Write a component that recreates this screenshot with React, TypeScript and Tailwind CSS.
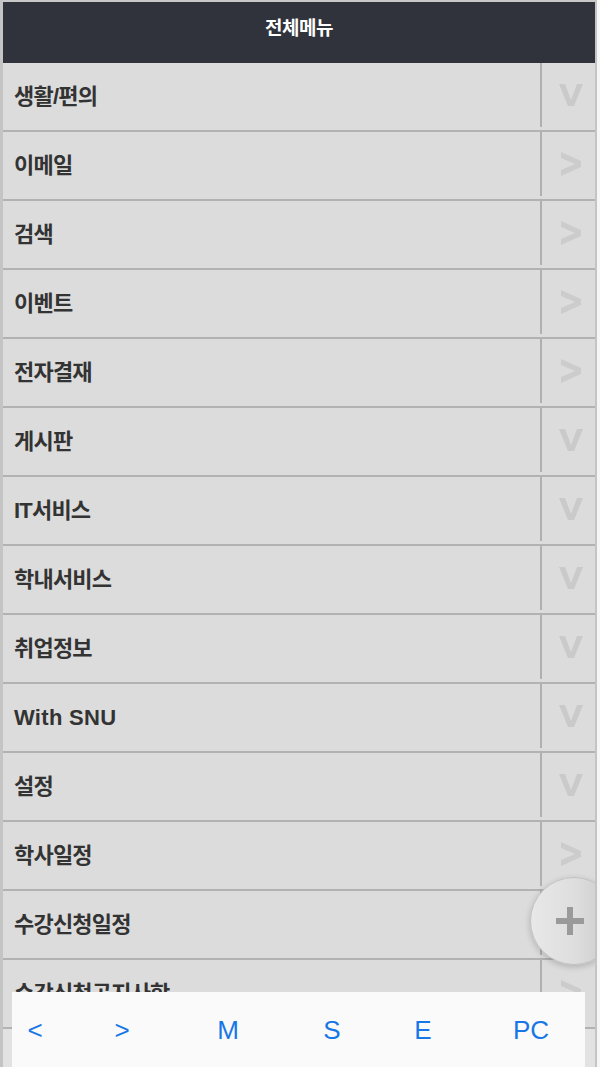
import { Fragment } from 'react';

type Menu = { label: string; open: boolean };

const menus: Menu[] = [
  { label: '생활/편의', open: true },
  { label: '이메일', open: false },
  { label: '검색', open: false },
  { label: '이벤트', open: false },
  { label: '전자결재', open: false },
  { label: '게시판', open: true },
  { label: 'IT서비스', open: true },
  { label: '학내서비스', open: true },
  { label: '취업정보', open: true },
  { label: 'With SNU', open: true },
  { label: '설정', open: true },
  { label: '학사일정', open: false },
  { label: '수강신청일정', open: false },
  { label: '수강신청공지사항', open: false },
];

const font = { fontFamily: '"Liberation Sans", "Noto Sans CJK KR", sans-serif' };

const Arrow = ({ open }: { open: boolean }) =>
  open ? (
    <svg width="24" height="24" viewBox="0 0 24 24">
      <polygon points="0,1 6,1 12,17 18,1 24,1 15,23 9,23" fill="#cacaca" />
    </svg>
  ) : (
    <svg width="22" height="26" viewBox="0 0 22 26">
      <polygon points="1,1 21,10 21,16 1,25 1,19 15,13 1,7" fill="#cccccc" />
    </svg>
  );

export default function App() {
  return (
    <div className="relative w-[600px] h-[1067px] overflow-hidden bg-[#f6f6f6]" style={font}>
      <div className="relative w-[597px] h-[1067px] overflow-hidden border-l-[3px] border-r-2 border-[#c4c4c4] bg-[#e2e2e2]">
        {/* 헤더 */}
        <div className="h-[63px] border-t-2 border-[#c8c8c8] bg-[#30323c] flex items-center justify-center">
          <span className="text-white text-[19px] font-bold tracking-[-0.5px] pb-[6px]">전체메뉴</span>
        </div>

        {/* 메뉴 목록 */}
        {menus.map((m) => (
          <Fragment key={m.label}>
            <div className="h-[69px] flex border-b-2 border-[#b2b2b2] bg-[#dcdcdc]">
              <div
                className={
                  'flex-1 flex items-center pl-[11px] text-[22px] font-bold text-[#333333] ' +
                  (m.label === 'With SNU' ? 'tracking-[0.3px]' : 'tracking-[-0.8px]')
                }
              >
                {m.label}
              </div>
              <div className="w-[55px] mb-[3px] border-l-2 border-[#b0b0b0] flex items-center justify-center pl-[4px]">
                <Arrow open={m.open} />
              </div>
            </div>
          </Fragment>
        ))}

        {/* 플로팅 버튼 */}
        <div className="absolute left-[527px] top-[877px] w-[88px] h-[88px] rounded-full border border-[#c2c2c2] bg-gradient-to-r from-[#e8e8e8] via-[#dedede] to-[#c9c9c9] shadow-[0_2px_6px_rgba(0,0,0,0.2)] flex items-center justify-center">
          <div className="relative w-[28px] h-[28px] mr-[8px]">
            <div className="absolute left-0 top-[11px] w-[28px] h-[6px] bg-[#9a9a9a]" />
            <div className="absolute left-[11px] top-0 w-[6px] h-[28px] bg-[#9a9a9a]" />
          </div>
        </div>
      </div>

      {/* 하단 툴바 */}
      <div className="absolute left-[12px] top-[992px] w-[573px] h-[75px] bg-[#fafafa] flex items-center overflow-hidden">
        <div className="flex items-center pt-[2px] text-[26px] text-[#1877e6]">
          <span className="w-[46px] text-center shrink-0">&lt;</span>
          <span className="w-[128px] text-center shrink-0">&gt;</span>
          <span className="w-[84px] text-center shrink-0">M</span>
          <span className="w-[124px] text-center shrink-0">S</span>
          <span className="w-[58px] text-center shrink-0">E</span>
          <span className="w-[158px] text-center shrink-0">PC</span>
        </div>
      </div>
    </div>
  );
}
